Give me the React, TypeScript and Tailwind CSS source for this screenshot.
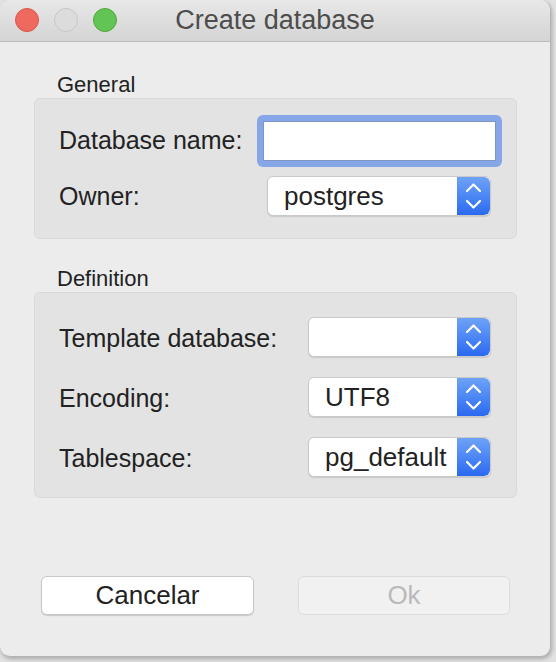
import React from "react";

const font = { fontFamily: '"Liberation Sans", Arial, sans-serif' };

function Stepper() {
  return (
    <div className="w-[33px] self-stretch rounded-r-[6px] bg-gradient-to-b from-[#6ea2f7] to-[#2a69f0] flex items-center justify-center">
      <svg width="33" height="39" viewBox="0 0 33 39" fill="none">
        <path d="M10 14 L16.5 7.5 L23 14" stroke="white" strokeWidth="2.2" strokeLinecap="round" strokeLinejoin="round" />
        <path d="M10 24 L16.5 30.5 L23 24" stroke="white" strokeWidth="2.2" strokeLinecap="round" strokeLinejoin="round" />
      </svg>
    </div>
  );
}

function Select({ value, width }: { value: string; width: string }) {
  return (
    <div className={`${width} h-[40px] flex rounded-[6px] bg-white border border-[#c9c9c9] shadow-[0_1px_1px_rgba(0,0,0,0.12)] overflow-hidden`}>
      <div className="flex-1 flex items-center pl-[16px] text-[26px] text-[#222] overflow-hidden whitespace-nowrap">{value}</div>
      <Stepper />
    </div>
  );
}

export default function App() {
  return (
    <div className="w-[556px] h-[662px] bg-[#e2e2e2]" style={font}>
      <div className="w-[551px] h-[657px] rounded-[10px] bg-[#ececec] border-r border-b border-[#b4b4b4] shadow-[1px_2px_4px_rgba(0,0,0,0.25)] overflow-hidden flex flex-col">
        {/* Title bar */}
        <div className="relative h-[42px] shrink-0 bg-gradient-to-b from-[#e8e8e8] to-[#d4d4d4] border-b border-[#bcbcbc] flex items-center justify-center">
          <div className="absolute left-[15px] top-[8px] flex gap-[15px]">
            <div className="w-[24px] h-[24px] rounded-full bg-[#ef6a5e] border border-[#d9564b]" />
            <div className="w-[24px] h-[24px] rounded-full bg-[#dcdcdc] border border-[#c6c6c6]" />
            <div className="w-[24px] h-[24px] rounded-full bg-[#61c454] border border-[#52a83f]" />
          </div>
          <span className="text-[27px] text-[#4d4d4d] leading-none">Create database</span>
        </div>

        {/* Content */}
        <div className="flex flex-col pl-[34px] w-[517px]">
          <div className="mt-[30px] ml-[23px] h-[26px] leading-[26px] text-[22px] text-[#222]">General</div>
          <div className="h-[141px] rounded-[6px] bg-[#e3e3e3] border border-[#d9d9d9] pt-[16px] pl-[24px] flex flex-col gap-[9px]">
            <div className="flex items-center h-[52px]">
              <div className="w-[198px] text-[25px] text-[#222]">Database name:</div>
              <div className="w-[245px] h-[52px] rounded-[6px] bg-[#85a7e7] p-[6px]">
                <div className="w-full h-full bg-white border border-[#7f96c4]" />
              </div>
            </div>
            <div className="flex items-center h-[40px]">
              <div className="w-[208px] pt-[2px] text-[25px] text-[#222]">Owner:</div>
              <Select value="postgres" width="w-[224px]" />
            </div>
          </div>

          <div className="mt-[27px] ml-[23px] h-[26px] leading-[26px] text-[22px] text-[#222]">Definition</div>
          <div className="h-[206px] rounded-[6px] bg-[#e3e3e3] border border-[#d9d9d9] pt-[24px] pl-[24px] flex flex-col gap-[20px]">
            <div className="flex items-center h-[40px]">
              <div className="w-[249px] pt-[4px] text-[25px] text-[#222]">Template database:</div>
              <Select value="" width="w-[183px]" />
            </div>
            <div className="flex items-center h-[40px]">
              <div className="w-[249px] pt-[4px] text-[25px] text-[#222]">Encoding:</div>
              <Select value="UTF8" width="w-[183px]" />
            </div>
            <div className="flex items-center h-[40px]">
              <div className="w-[249px] pt-[4px] text-[25px] text-[#222]">Tablespace:</div>
              <Select value="pg_default" width="w-[183px]" />
            </div>
          </div>
        </div>

        {/* Buttons */}
        <div className="mt-[78px] pl-[41px] flex gap-[44px]">
          <div className="w-[213px] h-[39px] rounded-[6px] bg-white border border-[#c8c8c8] shadow-[0_1px_1px_rgba(0,0,0,0.15)] flex items-center justify-center text-[26px] text-[#222]">
            Cancelar
          </div>
          <div className="w-[212px] h-[39px] rounded-[6px] bg-[#f1f1f1] border border-[#dcdcdc] flex items-center justify-center text-[26px] text-[#b9b9b9]">
            Ok
          </div>
        </div>
      </div>
    </div>
  );
}
